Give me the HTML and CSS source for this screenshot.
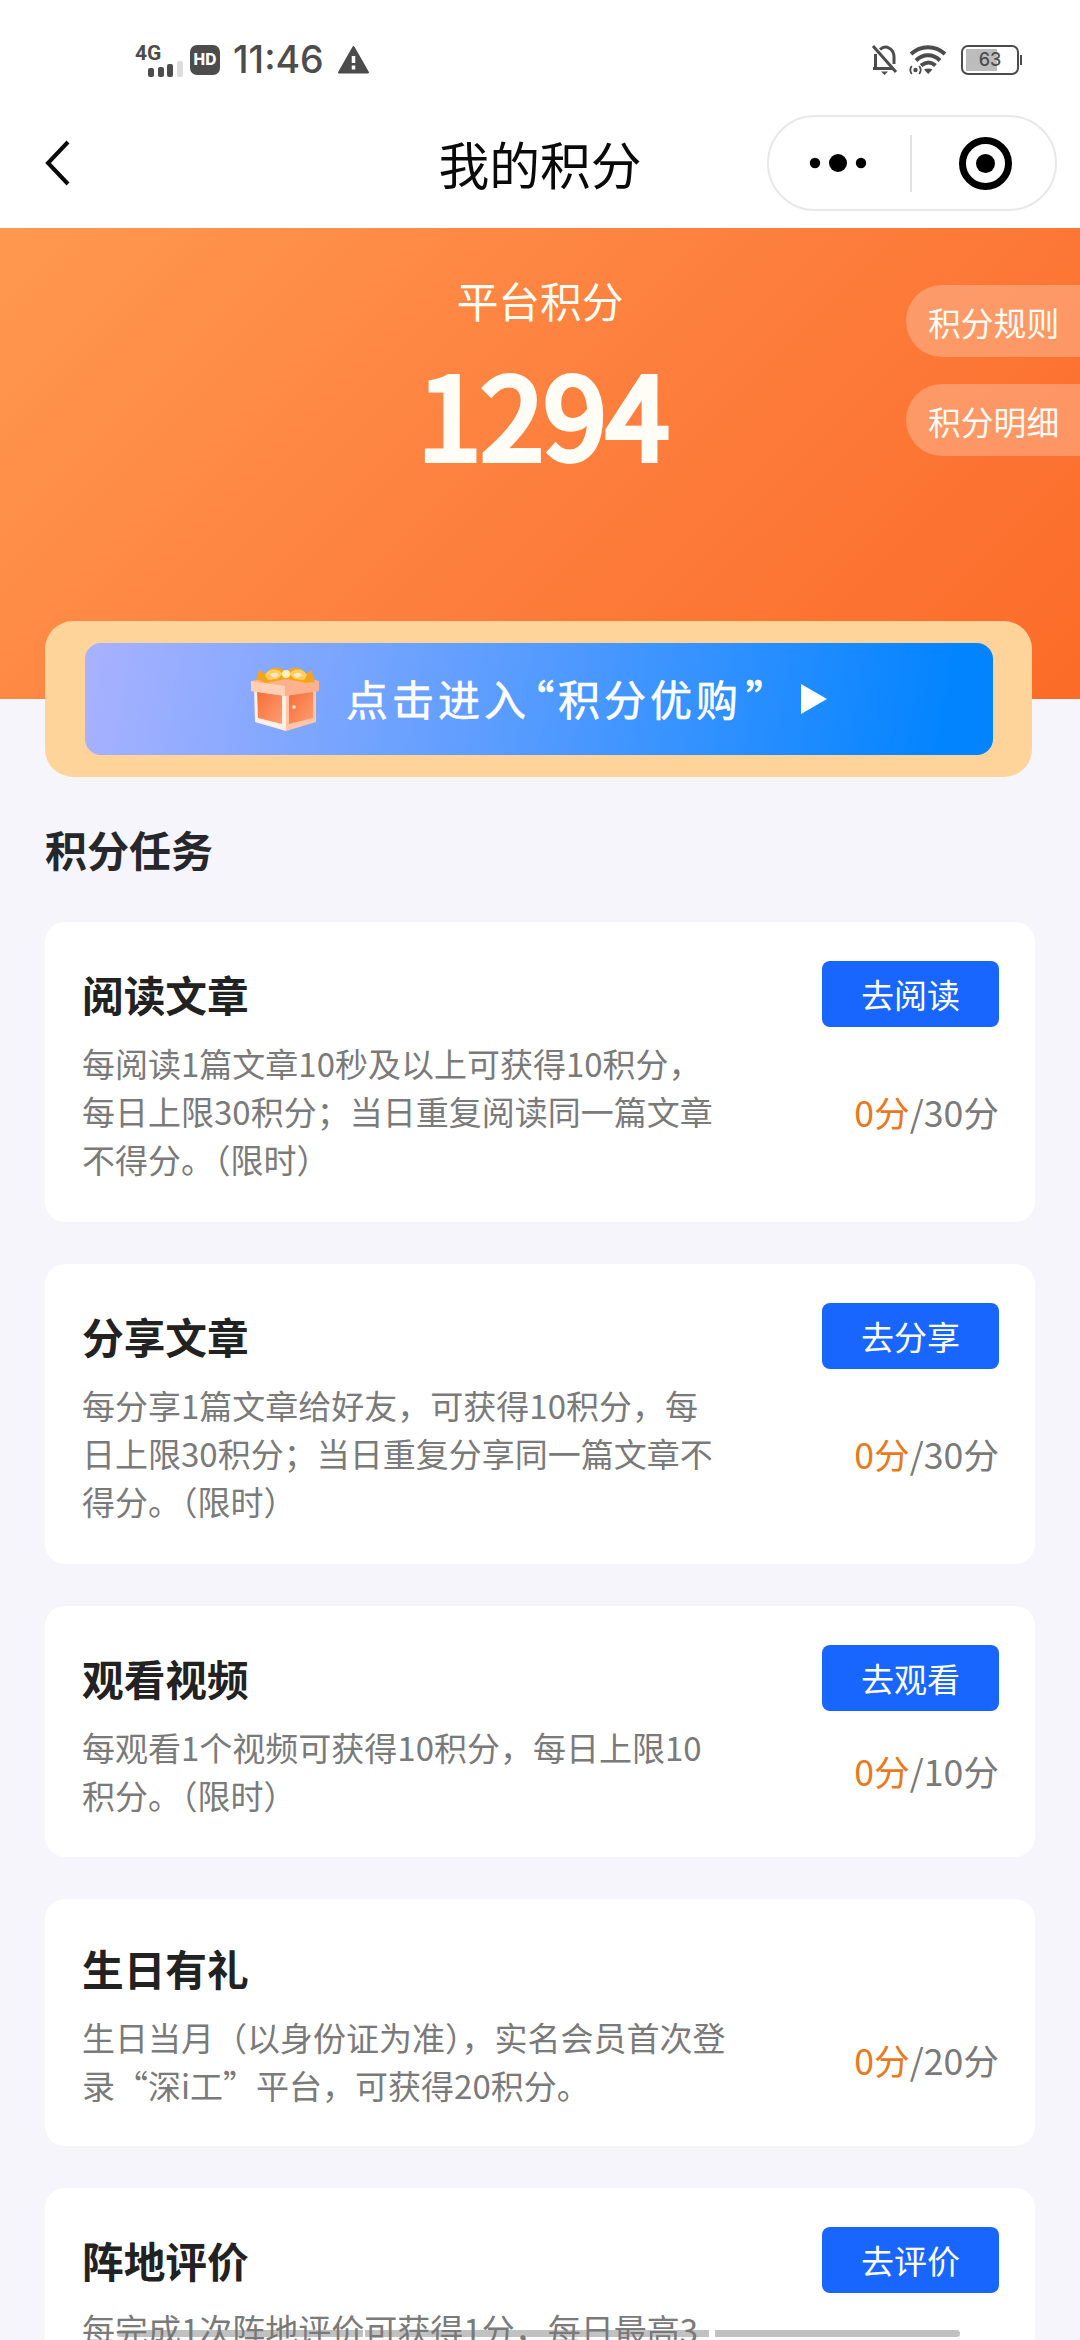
FILE: index.html
```html
<!DOCTYPE html>
<html lang="zh-CN">
<head>
<meta charset="utf-8">
<title>我的积分</title>
<link rel="stylesheet" href="styles.css">
</head>
<body>
<div class="screen">
  <header class="top">
    <div class="status">
      <div class="status-left">
        <div class="signal"><span class="net">4G</span>
          <svg class="bars" width="36" height="14" viewBox="0 0 36 14"><g fill="#4c4c4c"><rect x="0" y="5" width="6" height="9" rx="2"/><rect x="10" y="4" width="6" height="10" rx="2"/><rect x="19" y="1" width="6" height="13" rx="2"/></g><rect x="29" y="-2" width="6" height="16" rx="2" fill="#ddd"/></svg>
        </div>
        <span class="hd">HD</span>
        <span class="clock">11:46</span>
        <svg class="warn" width="32" height="28" viewBox="0 0 32 28"><path d="M15.500 1L30 26.500H1z" fill="#4c4c4c" stroke="#4c4c4c" stroke-width="2" stroke-linejoin="round"/><path d="M15.500 10v7M15.500 19.500v4" stroke="#fff" stroke-width="3.500"/></svg>
      </div>
      <div class="status-right">
        <svg width="28" height="31" viewBox="0 0 28 31" fill="none" stroke="#4c4c4c" stroke-width="3"><path d="M4.500 9v14M2 23.500h20M9 4.500C15-1 23 4 23 12v7M2 1l23 26"/><path d="M10 26.500h7l-3.500 3.500z" fill="#4c4c4c" stroke="none"/></svg>
        <svg width="38" height="30" viewBox="0 0 38 30" fill="none" stroke="#4c4c4c" stroke-width="4"><path d="M2 9C12 0 26 0 36 9M7 15.500c7-7 17-7 24 0M12 20.500c5-4 10-4 14.500 0"/><path d="M15 24.500q4.500-2 8.500 0L19.200 29z" fill="#4c4c4c" stroke="none"/><circle cx="6.500" cy="25" r="2.200" fill="#4c4c4c" stroke="none"/><path d="M2.800 21q-3 4 0 8M10.200 21q3 4 0 8" stroke-width="1.800"/></svg>
        <div class="battery"><span class="level">63</span></div>
      </div>
    </div>
    <nav class="nav">
      <svg class="back" width="26" height="46" viewBox="0 0 26 46"><path d="M24 2L4 23 24 44" fill="none" stroke="#0a0a0a" stroke-width="4"/></svg>
      <h1 class="title">我的积分</h1>
      <div class="capsule">
        <svg width="56" height="20" viewBox="0 0 56 20"><circle cx="5" cy="10" r="5.200"/><circle cx="28" cy="10" r="9"/><circle cx="51" cy="10" r="5.200"/></svg>
        <i class="split"></i>
        <svg class="ring" width="53" height="53" viewBox="0 0 53 53"><circle cx="26.500" cy="26.500" r="23" fill="none" stroke="#000" stroke-width="7"/><circle cx="26.500" cy="26.500" r="9.500"/></svg>
      </div>
    </nav>
  </header>

  <section class="hero">
    <div class="hero-label">平台积分</div>
    <div class="hero-score">1294</div>
    <div class="hero-links"><a class="pill">积分规则</a><a class="pill">积分明细</a></div>
  </section>

  <main class="content">
    <div class="banner">
      <div class="banner-inner">
        <svg class="gift" width="72" height="66" viewBox="0 0 72 66">
          <defs><linearGradient id="side" x1="0" y1="0" x2="1" y2="1"><stop offset="0" stop-color="#f66d38"/><stop offset="1" stop-color="#ff9d70"/></linearGradient></defs>
          <path d="M4 20l32 5v40L5 56z" fill="#fff0e5"/><path d="M36 25l30-5v36L36 65z" fill="#ffc6a9"/>
          <path d="M7 24l25 4v30L8 52z" fill="url(#side)"/><path d="M39 28l24-4v28L39 58z" fill="url(#side)"/>
          <path d="M1 15l20-4h31l17 4v10L36 30 1 25z" fill="#ffb08d"/><path d="M1 15l34 5v10L1 25z" fill="#ffd0b5"/>
          <path d="M6 13l3-9 6 4C21-1 32 1 36 6c4-5 15-7 20 2l5-4 4 12-9 1-20-4-20 4z" fill="#f6a51b"/>
          <path d="M15 9c4-7 13-7 18-1l-6 5-9 1zM39 8c5-6 14-6 18 1l-3 5-9-1z" fill="#ffcf62"/><path d="M20 9c3-3 7-3 9 0l-4 3zM43 9c3-3 7-3 9 0l-5 3z" fill="#ffe9c8"/><circle cx="36" cy="8" r="4" fill="#fff2bd"/><circle cx="44" cy="41" r="1.800" fill="#ffe1cf"/>
        </svg>
        <span class="banner-text">点击进入<span class="q">“</span>积分优购<span class="q">”</span></span>
        <svg class="play" width="28" height="30" viewBox="0 0 28 30"><path d="M1 0l26 15L1 30z" fill="#fff"/></svg>
      </div>
    </div>

    <h2 class="section-title">积分任务</h2>

    <div class="tasks">
      <article class="card tall">
        <div class="info"><h3>阅读文章</h3><p>每阅读1篇文章10秒及以上可获得10积分，<br>每日上限30积分；当日重复阅读同一篇文章<br>不得分。（限时）</p></div>
        <div class="side"><a class="btn">去阅读</a><div class="progress"><b>0分</b>/30分</div></div>
      </article>
      <article class="card tall">
        <div class="info"><h3>分享文章</h3><p>每分享1篇文章给好友，可获得10积分，每<br>日上限30积分；当日重复分享同一篇文章不<br>得分。（限时）</p></div>
        <div class="side"><a class="btn">去分享</a><div class="progress"><b>0分</b>/30分</div></div>
      </article>
      <article class="card medium">
        <div class="info"><h3>观看视频</h3><p>每观看1个视频可获得10积分，每日上限10<br>积分。（限时）</p></div>
        <div class="side"><a class="btn">去观看</a><div class="progress"><b>0分</b>/10分</div></div>
      </article>
      <article class="card plain">
        <div class="info"><h3>生日有礼</h3><p>生日当月（以身份证为准），实名会员首次登<br>录“深i工”平台，可获得20积分。</p></div>
        <div class="side"><div class="progress"><b>0分</b>/20分</div></div>
      </article>
      <article class="card tall">
        <div class="info"><h3>阵地评价</h3><p>每完成1次阵地评价可获得1分，每日最高3</p></div>
        <div class="side"><a class="btn">去评价</a></div>
      </article>
    </div>
  </main>
  <div class="gesture"><i></i><i></i><i></i></div>
</div>
</body>
</html>
```
FILE: styles.css
```css
* { box-sizing: border-box; margin: 0; padding: 0; }
body { width: 1080px; height: 2340px; overflow: hidden; font-family: "Noto Sans CJK SC", "Noto Sans", sans-serif; background: #f5f5fb; }
.screen { position: relative; width: 1080px; height: 2340px; overflow: hidden; display: flex; flex-direction: column; }
svg { display: block; flex: none; overflow: visible; }

.top { height: 228px; flex: none; background: #fff; }
.status { height: 100px; padding: 17px 61px 0 135px; display: flex; justify-content: space-between; color: #4c4c4c; }
.status-left, .status-right { display: flex; align-items: center; height: 86px; }
.signal { width: 55px; height: 34px; display: flex; flex-direction: column; }
.net { font: 700 21px/20px Roboto, sans-serif; height: 20px; }
.bars { margin-left: 13px; }
.hd { width: 30px; height: 30px; border-radius: 7px; background: #4c4c4c; color: #fff; font: 800 15.500px/30px Inter, sans-serif; text-align: center; }
.clock { margin-left: 13px; width: 95px; font: 500 37.500px/44px Inter, sans-serif; white-space: nowrap; }
.warn { margin-left: 10px; }
.status-right { gap: 10px; }
.battery { position: relative; width: 58px; height: 30px; margin-left: 4px; padding: 3px; border: 2px solid #4c4c4c; border-radius: 7px; background: linear-gradient(90deg, #bcbcbc 31px, transparent 31px) 3px 2px / 48px 22px no-repeat; }
.battery::after { content: ""; position: absolute; right: -5px; top: 8px; width: 2px; height: 10px; background: #4c4c4c; }
.level { display: block; text-align: center; font: 500 18px/20px Inter, sans-serif; }

.nav { height: 128px; display: grid; grid-template-columns: 313px 1fr 313px; align-items: center; padding-bottom: 2px; }
.back { margin-left: 44px; }
.title { text-align: center; font-size: 50.800px; line-height: 74px; font-weight: 400; color: #0a0a0a; padding-bottom: 1px; }
.capsule { width: 290px; height: 96px; border: 2px solid #e8e8e8; border-radius: 48px; display: flex; align-items: center; padding: 0 0 0 41px; }
.split { width: 2px; height: 57px; background: #e2e2e2; margin: 0 47px 0 44px; }

.hero { position: relative; height: 471px; flex: none; background: linear-gradient(135deg, #ff994f 0%, #fd7f3e 50%, #fc6b28 100%); color: #fffdf5; text-align: center; padding-top: 42px; }
.hero-label { font-size: 41.700px; line-height: 60px; }
.hero-score { font-size: 113px; line-height: 140px; font-weight: 400; -webkit-text-stroke: 6px #fffdf5; margin-top: 11px; padding-left: 7px; }
.hero-links { position: absolute; right: 0; top: 57px; display: flex; flex-direction: column; gap: 27px; }
.pill { width: 174px; height: 72px; border-radius: 36px 0 0 36px; background: rgba(255, 255, 255, .25); padding-left: 22px; text-align: left; font-size: 32.800px; line-height: 73px; white-space: nowrap; }

.content { position: relative; margin-top: -78px; padding: 0 45px; display: flex; flex-direction: column; }
.banner { width: 987px; height: 156px; border-radius: 28px; background: #ffd49a; padding: 22px 39px 22px 40px; }
.banner-inner { height: 112px; border-radius: 16px; background: linear-gradient(100deg, #a9b2ff 0%, #5c9dff 45%, #0384ff 94%); display: flex; align-items: center; padding-left: 165px; color: #fff; }
.banner-text { margin-left: 24px; width: 430px; padding-bottom: 2px; font-size: 42px; line-height: 62px; letter-spacing: 4px; white-space: nowrap; -webkit-text-stroke: .6px #fff; }
.q { display: inline-block; width: 28px; text-align: center; letter-spacing: 0; font-feature-settings: "halt"; line-height: 50px; }
.play { margin-left: 24px; }
.section-title { margin-top: 41px; font-size: 42px; line-height: 62px; font-weight: 700; color: #26272b; }
.tasks { margin-top: 42px; display: flex; flex-direction: column; gap: 42px; }
.card { width: 990px; border-radius: 20px; background: #fff; padding: 39px 36px 0 37px; display: flex; justify-content: space-between; }
.tall { height: 300px; }
.medium { height: 251px; }
.plain { height: 247px; }
.info h3 { margin-top: 2px; font-size: 41.700px; line-height: 62px; font-weight: 700; color: #222; }
.info p { margin-top: 14px; font-size: 33px; line-height: 48px; color: #7a7a7a; white-space: nowrap; }
.plain .info h3 { margin-top: -1px; }
.side { display: flex; flex-direction: column; align-items: flex-end; }
.btn { width: 177px; height: 66px; border-radius: 8px; background: #1966ff; color: #fff; font-size: 33px; line-height: 67px; text-align: center; }
.progress { margin-top: 59px; font-size: 35.700px; line-height: 52px; color: #7a7a7a; white-space: nowrap; }
.progress b { font-weight: 400; color: #e9791c; }
.medium .progress { margin-top: 34px; }
.plain .progress { margin-top: 96px; }
.gesture { position: absolute; left: 117px; bottom: 3px; display: flex; gap: 2px; }
.gesture i { height: 7px; background: rgba(120, 120, 120, .46); width: 246px; border-radius: 4px 0 0 4px; }
.gesture i:nth-child(2) { width: 344px; border-radius: 0; }
.gesture i:nth-child(3) { width: 245px; margin-left: 4px; border-radius: 0 4px 4px 0; }
```
